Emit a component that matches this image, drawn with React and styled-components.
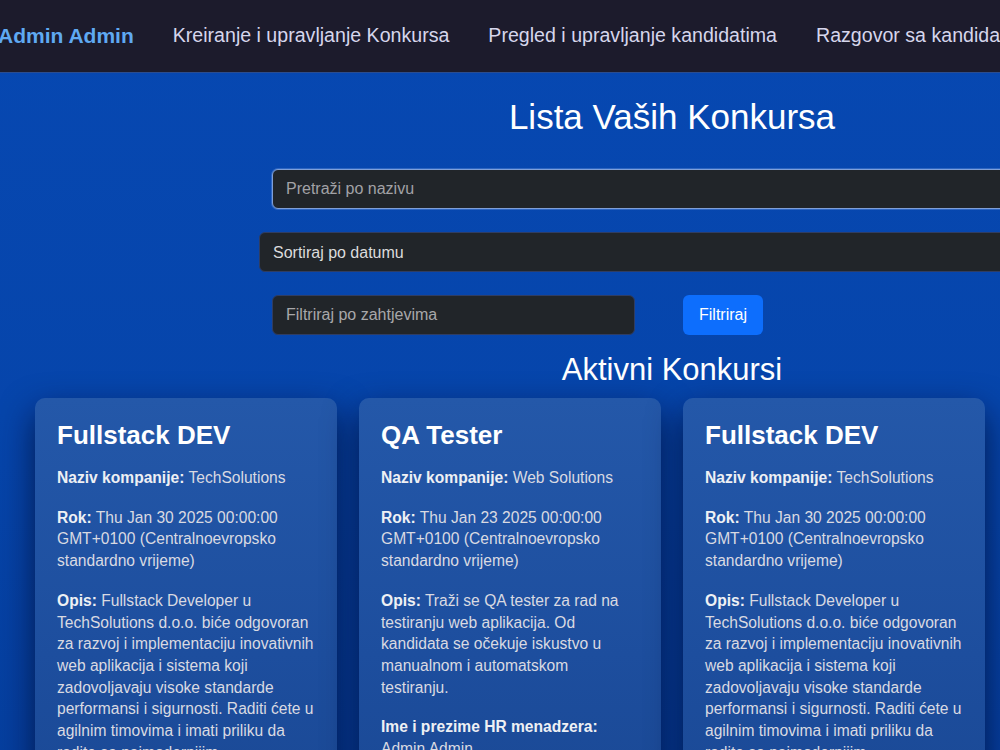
import React from "react";
import styled, { createGlobalStyle } from "styled-components";

const Global = createGlobalStyle`
  html, body { margin: 0; padding: 0; overflow: hidden; background: #0645aa; }
  body { font-family: "Liberation Sans", Arial, sans-serif; }
  * { box-sizing: border-box; }
`;

const Page = styled.div`
  width: 1344px;
  min-height: 100vh;
  background: linear-gradient(180deg, #0748b2 0%, #0645ab 50%, #053d9c 100%);
`;

const Nav = styled.nav`
  height: 73px;
  display: flex;
  align-items: center;
  gap: 39px;
  padding-bottom: 1px;
  background: #1c1b2c;
  border-bottom: 1px solid #2b4d8f;
`;

const Brand = styled.a`
  margin-left: -2px;
  font-size: 21px;
  font-weight: 700;
  color: #5fa9f2;
  white-space: nowrap;
`;

const NavLink = styled.a`
  font-size: 19.6px;
  color: #d6d6ec;
  white-space: nowrap;
`;

const Main = styled.main`
  display: flex;
  flex-direction: column;
  align-items: center;
`;

const Title = styled.h1`
  margin: 23px 0 0;
  font-size: 35px;
  line-height: 42px;
  font-weight: 400;
  color: #ffffff;
`;

const Controls = styled.div`
  width: 800px;
  margin-top: 31px;
  display: flex;
  flex-direction: column;
  gap: 23px;
`;

const fieldBase = `
  height: 40px;
  border-radius: 6px;
  background: #212529;
  font-family: "Liberation Sans", Arial, sans-serif;
  font-size: 16px;
  outline: none;
`;

const SearchInput = styled.input`
  ${fieldBase}
  width: 100%;
  padding: 0 13px;
  color: #e0e0e0;
  border: 1px solid ${(p) => (p.$focused ? "#7f9fd8" : "#3a4d7a")};
  box-shadow: ${(p) => (p.$focused ? "0 0 0 1px rgba(120,160,230,0.35)" : "none")};
  &::placeholder { color: #a2a2a6; }
`;

const SortSelect = styled.select`
  ${fieldBase}
  width: 826px;
  margin-left: -13px;
  padding: 0 13px;
  color: #dcdcdc;
  border: 1px solid #2f3d63;
  appearance: none;
`;

const FilterRow = styled.div`
  display: flex;
  align-items: center;
  gap: 48px;
`;

const FilterInput = styled.input`
  ${fieldBase}
  width: 363px;
  padding: 0 13px;
  color: #e0e0e0;
  border: 1px solid #2f3d63;
  &::placeholder { color: #a8a8aa; }
`;

const Button = styled.button`
  height: 40px;
  width: 80px;
  border: none;
  border-radius: 6px;
  background: #0d6efd;
  color: #ffffff;
  font-family: "Liberation Sans", Arial, sans-serif;
  font-size: 16px;
`;

const SubTitle = styled.h2`
  margin: 17px 0 0;
  font-size: 31px;
  line-height: 36px;
  font-weight: 400;
  color: #ffffff;
`;

const Cards = styled.div`
  align-self: stretch;
  margin-top: 10px;
  padding: 0 35px;
  display: grid;
  grid-template-columns: repeat(4, 302px);
  gap: 22px;
`;

const Card = styled.article`
  padding: 22px 22px 22px 22px;
  border-radius: 10px;
  background: linear-gradient(180deg, #2458a9 0%, #1d4e9e 60%, #1a4894 100%);
  box-shadow: 0 14px 34px rgba(0, 8, 40, 0.7);
  color: #e4e4e8;
`;

const CardTitle = styled.h3`
  margin: 0 0 16px;
  font-size: 26px;
  line-height: 31px;
  font-weight: 700;
  color: #ffffff;
`;

const Field = styled.p`
  margin: 0 0 18px;
  font-size: 15.6px;
  line-height: 21.7px;
  color: #d9dae2;
  b { color: #eef0f4; font-weight: 700; }
`;

const data = [
  {
    title: "Fullstack DEV",
    company: "TechSolutions",
    deadline: "Thu Jan 30 2025 00:00:00 GMT+0100 (Centralnoevropsko standardno vrijeme)",
    desc: "Fullstack Developer u TechSolutions d.o.o. biće odgovoran za razvoj i implementaciju inovativnih web aplikacija i sistema koji zadovoljavaju visoke standarde performansi i sigurnosti. Raditi ćete u agilnim timovima i imati priliku da radite sa najmodernijim tehnologijama.",
  },
  {
    title: "QA Tester",
    company: "Web Solutions",
    deadline: "Thu Jan 23 2025 00:00:00 GMT+0100 (Centralnoevropsko standardno vrijeme)",
    desc: "Traži se QA tester za rad na testiranju web aplikacija. Od kandidata se očekuje iskustvo u manualnom i automatskom testiranju.",
    hr: "Admin Admin",
  },
  {
    title: "Fullstack DEV",
    company: "TechSolutions",
    deadline: "Thu Jan 30 2025 00:00:00 GMT+0100 (Centralnoevropsko standardno vrijeme)",
    desc: "Fullstack Developer u TechSolutions d.o.o. biće odgovoran za razvoj i implementaciju inovativnih web aplikacija i sistema koji zadovoljavaju visoke standarde performansi i sigurnosti. Raditi ćete u agilnim timovima i imati priliku da radite sa najmodernijim tehnologijama.",
  },
];

export default function App() {
  return (
    <>
      <Global />
      <Page>
        <Nav>
          <Brand>Admin Admin</Brand>
          <NavLink>Kreiranje i upravljanje Konkursa</NavLink>
          <NavLink>Pregled i upravljanje kandidatima</NavLink>
          <NavLink>Razgovor sa kandidatima</NavLink>
        </Nav>
        <Main>
          <Title>Lista Vaših Konkursa</Title>
          <Controls>
            <SearchInput $focused placeholder="Pretraži po nazivu" />
            <SortSelect defaultValue="datum">
              <option value="datum">Sortiraj po datumu</option>
            </SortSelect>
            <FilterRow>
              <FilterInput placeholder="Filtriraj po zahtjevima" />
              <Button>Filtriraj</Button>
            </FilterRow>
          </Controls>
          <SubTitle>Aktivni Konkursi</SubTitle>
          <Cards>
            {data.map((c, i) => (
              <Card key={i}>
                <CardTitle>{c.title}</CardTitle>
                <Field><b>Naziv kompanije:</b> {c.company}</Field>
                <Field><b>Rok:</b> {c.deadline}</Field>
                <Field><b>Opis:</b> {c.desc}</Field>
                {c.hr && <Field><b>Ime i prezime HR menadzera:</b> {c.hr}</Field>}
              </Card>
            ))}
          </Cards>
        </Main>
      </Page>
    </>
  );
}
